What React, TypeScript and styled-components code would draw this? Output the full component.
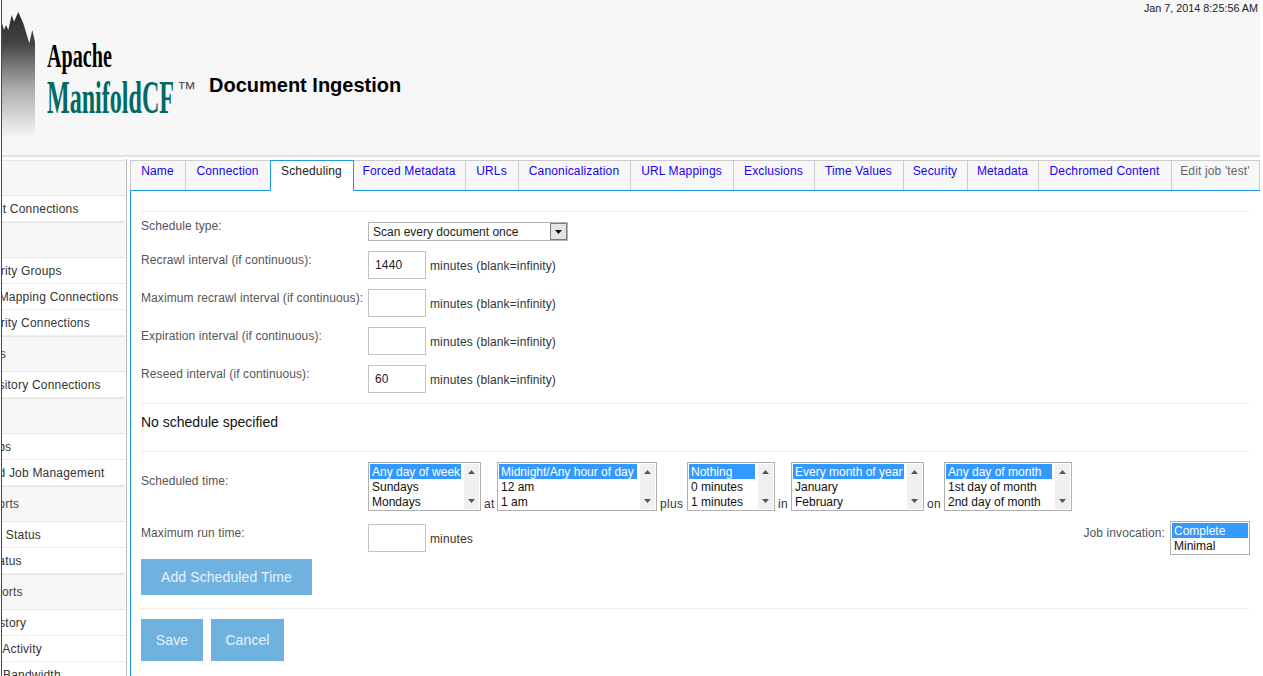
import React from "react";
import styled, { createGlobalStyle } from "styled-components";

const GlobalStyle = createGlobalStyle`
  html, body {
    margin: 0;
    height: 100%;
    overflow: hidden;
    background: #fff;
  }
  body {
    font-family: "Liberation Sans", Arial, sans-serif;
    font-size: 12px;
    color: #333;
  }
`;

const Page = styled.div`
  display: flex;
  height: 676px;
  overflow: hidden;
`;

const Edge = styled.div`
  width: 1px;
  margin-left: 1px;
  background: #3b4a63;
  flex: none;
`;

const Main = styled.div`
  width: 1258px;
  flex: none;
`;

const Header = styled.header`
  display: flex;
  height: 155px;
  background: #f7f7f7;
  border-bottom: 2px solid #e2e2e2;
`;

const LogoMark = styled.svg`
  width: 33px;
  height: 126px;
  margin-top: 12px;
  flex: none;
`;

const Brand = styled.div`
  width: 162px;
  margin-left: 12px;
  padding-top: 37px;
  flex: none;
`;

const BrandLine = styled.div<{ $size: number; $scale: number; $color: string; $height: number }>`
  font-family: "Liberation Serif", "Times New Roman", serif;
  font-weight: bold;
  font-size: ${(p) => p.$size}px;
  line-height: ${(p) => p.$height}px;
  color: ${(p) => p.$color};
  white-space: nowrap;
  transform: scaleX(${(p) => p.$scale});
  transform-origin: left center;
`;

const Trademark = styled.span`
  display: inline-block;
  margin-left: 5px;
  font-family: "Liberation Sans", Arial, sans-serif;
  font-weight: normal;
  font-size: 19px;
  line-height: 0;
  color: #555;
  vertical-align: 18px;
  transform: scaleX(1.95);
  transform-origin: left center;
`;

const Title = styled.h1`
  margin: 73px 0 0;
  font-size: 20px;
  line-height: 24px;
  font-weight: bold;
  color: #000;
`;

const DateStamp = styled.div`
  margin-left: auto;
  padding: 2px 2px 0 0;
  font-size: 10.8px;
  line-height: 13px;
  color: #222;
`;

const Body = styled.div`
  display: flex;
  padding-top: 2px;
`;

const Sidebar = styled.nav`
  width: 124px;
  height: 520px;
  border-right: 1px solid #bbb;
  overflow: hidden;
  flex: none;
`;

const SideList = styled.div`
  margin-left: -73px;
  margin-right: 1px;
  padding-top: 1px;
  letter-spacing: 0.2px;
`;

const SideSection = styled.div`
  height: 36px;
  box-sizing: border-box;
  display: flex;
  align-items: center;
  padding-left: 8px;
  background: #f7f7f7;
  border-top: 1px solid #e6e6e6;
  border-bottom: 1px solid #e6e6e6;
  color: #444;
  white-space: nowrap;
`;

const SideLink = styled.div`
  height: 26px;
  box-sizing: border-box;
  display: flex;
  align-items: center;
  padding-left: 17px;
  border-bottom: 1px dotted #ddd;
  color: #333;
  white-space: nowrap;
`;

const Content = styled.div`
  margin: 1px 0 0 3px;
  width: 1130px;
  flex: none;
`;

const Tabs = styled.div`
  display: flex;
  height: 30px;
`;

const Tab = styled.div<{ $active?: boolean; $plain?: boolean; $width: number }>`
  box-sizing: border-box;
  width: ${(p) => p.$width}px;
  padding: 3px 1px 0 0;
  line-height: 14px;
  letter-spacing: 0.15px;
  text-align: center;
  white-space: nowrap;
  background: ${(p) => (p.$active ? "#fff" : "#f7f7f7")};
  color: ${(p) => (p.$active ? "#222" : p.$plain ? "#666" : "#1a00ee")};
  border-top: 1px solid ${(p) => (p.$active ? "#1c9ae0" : "#ccc")};
  border-right: 1px solid ${(p) => (p.$active ? "#1c9ae0" : "#ccc")};
  border-left: ${(p) => (p.$active ? "1px solid #1c9ae0" : "none")};
  height: ${(p) => (p.$active ? "31px" : "30px")};
  margin-left: ${(p) => (p.$active ? "-1px" : "0")};
  position: relative;
  z-index: ${(p) => (p.$active ? 1 : 0)};

  &:first-child {
    border-left: 1px solid #ccc;
  }
`;

const Panel = styled.div`
  height: 486px;
  border-top: 1px solid #1c9ae0;
  border-left: 1px solid #1c9ae0;
  padding: 20px 10px 0;
  box-sizing: border-box;
`;

const Divider = styled.div<{ $before?: number; $after: number }>`
  border-top: 1px dotted #ddd;
  margin-top: ${(p) => p.$before ?? 0}px;
  margin-bottom: ${(p) => p.$after}px;
`;

const FormRow = styled.div<{ $gap?: number }>`
  display: flex;
  margin-bottom: ${(p) => p.$gap ?? 10}px;
`;

const Label = styled.div<{ $top: number }>`
  width: 227px;
  margin-top: ${(p) => p.$top}px;
  line-height: 14px;
  letter-spacing: 0.1px;
  color: #555;
  white-space: nowrap;
  flex: none;
`;

const Dropdown = styled.div`
  display: flex;
  align-items: center;
  justify-content: space-between;
  box-sizing: border-box;
  width: 200px;
  height: 19px;
  padding-left: 4px;
  border: 1px solid #b4b4b4;
  color: #222;
`;

const DropButton = styled.div`
  display: flex;
  align-items: center;
  justify-content: center;
  box-sizing: border-box;
  width: 17px;
  height: 17px;
  background: #e4e4e4;
  border: 1px solid #7c7c7c;
`;

const TextBox = styled.input<{ $mt?: number }>`
  box-sizing: border-box;
  width: 58px;
  height: 28px;
  margin: ${(p) => p.$mt ?? 0}px 0 0;
  padding: 0 6px;
  border: 1px solid #c4c4c4;
  font: 12px "Liberation Sans", Arial, sans-serif;
  letter-spacing: 0.2px;
  color: #222;
  background: #fff;
  outline: none;
`;

const Hint = styled.span`
  margin-left: 4px;
  align-self: center;
  padding-top: 2px;
  color: #333;
  line-height: 14px;
  letter-spacing: 0.12px;
`;

const Notice = styled.div`
  box-sizing: border-box;
  height: 47px;
  padding-bottom: 12px;
  display: flex;
  align-items: center;
  font-size: 14px;
  color: #111;
`;

const ListRow = styled.div`
  display: flex;
  align-items: flex-end;
  gap: 3px;
`;

const Joiner = styled.span<{ $width: number }>`
  width: ${(p) => p.$width}px;
  line-height: 14px;
  letter-spacing: 0.3px;
  color: #333;
  flex: none;
`;

const ListFrame = styled.div<{ $width: number }>`
  display: flex;
  box-sizing: border-box;
  width: ${(p) => p.$width}px;
  padding: 1px;
  border: 1px solid #b0b0b0;
  background: #fff;
  flex: none;
`;

const ListItems = styled.div`
  flex: 1;
  min-width: 0;
`;

const ListItem = styled.div<{ $selected?: boolean }>`
  height: 15px;
  line-height: 17px;
  padding-left: 2px;
  white-space: nowrap;
  overflow: hidden;
  color: ${(p) => (p.$selected ? "#fff" : "#111")};
  background: ${(p) => (p.$selected ? "#3399ff" : "transparent")};
`;

const ScrollTrack = styled.div`
  display: flex;
  flex-direction: column;
  align-items: center;
  justify-content: space-between;
  box-sizing: border-box;
  width: 15px;
  margin-left: 3px;
  padding: 6px 0;
  background: #f0f0f0;
  flex: none;
`;

const Invocation = styled.div`
  display: flex;
  margin-left: auto;
`;

const InvocationLabel = styled.div`
  margin: 5px 5px 0 0;
  line-height: 14px;
  letter-spacing: 0.1px;
  color: #555;
`;

const Actions = styled.div`
  display: flex;
  gap: 8px;
`;

const Button = styled.button<{ $height: number; $width: number }>`
  width: ${(p) => p.$width}px;
  height: ${(p) => p.$height}px;
  padding: 0;
  border: none;
  background: #6fb1df;
  color: #e8f2fa;
  font: 14px "Liberation Sans", Arial, sans-serif;
  letter-spacing: 0.1px;
`;

const sideGroups = [
  { title: "Outputs", links: ["List Output Connections"] },
  {
    title: "Authorities",
    links: ["List Authority Groups", "List User Mapping Connections", "List Authority Connections"],
  },
  { title: "Repositories", links: ["List Repository Connections"] },
  { title: "Jobs", links: ["List all Jobs", "Status and Job Management"] },
  { title: "Status Reports", links: ["Document Status", "Queue Status"] },
  { title: "History Reports", links: ["Simple History", "Maximum Activity", "Maximum Bandwidth"] },
];

const tabs = [
  { name: "Name", width: 56 },
  { name: "Connection", width: 85 },
  { name: "Scheduling", width: 84, active: true },
  { name: "Forced Metadata", width: 112 },
  { name: "URLs", width: 53 },
  { name: "Canonicalization", width: 112 },
  { name: "URL Mappings", width: 103 },
  { name: "Exclusions", width: 81 },
  { name: "Time Values", width: 89 },
  { name: "Security", width: 64 },
  { name: "Metadata", width: 71 },
  { name: "Dechromed Content", width: 133 },
  { name: "Edit job 'test'", width: 88, plain: true },
];

const intervals = [
  { label: "Recrawl interval (if continuous):", value: "1440" },
  { label: "Maximum recrawl interval (if continuous):", value: "" },
  { label: "Expiration interval (if continuous):", value: "" },
  { label: "Reseed interval (if continuous):", value: "60" },
];

const schedule = [
  { width: 113, items: ["Any day of week", "Sundays", "Mondays"] },
  { joiner: "at", joinerWidth: 10, width: 160, items: ["Midnight/Any hour of day", "12 am", "1 am"] },
  { joiner: "plus", joinerWidth: 24, width: 88, items: ["Nothing", "0 minutes", "1 minutes"] },
  { joiner: "in", joinerWidth: 10, width: 133, items: ["Every month of year", "January", "February"] },
  { joiner: "on", joinerWidth: 14, width: 128, items: ["Any day of month", "1st day of month", "2nd day of month"] },
];

function Arrow({ up, color = "#555" }: { up?: boolean; color?: string }) {
  return (
    <svg width={7} height={4} viewBox="0 0 7 4">
      <path d={up ? "M3.5 0 L7 4 L0 4 Z" : "M0 0 L7 0 L3.5 4 Z"} fill={color} />
    </svg>
  );
}

function ListBox({ width, items, scroll = true }: { width: number; items: string[]; scroll?: boolean }) {
  return (
    <ListFrame $width={width}>
      <ListItems>
        {items.map((item, i) => (
          <ListItem key={item} $selected={i === 0}>
            {item}
          </ListItem>
        ))}
      </ListItems>
      {scroll && (
        <ScrollTrack>
          <Arrow up />
          <Arrow />
        </ScrollTrack>
      )}
    </ListFrame>
  );
}

export default function App() {
  return (
    <Page>
      <GlobalStyle />
      <Edge />
      <Main>
        <Header>
          <LogoMark viewBox="0 0 33 126">
            <defs>
              <linearGradient id="feather" x1="0" y1="0" x2="0" y2="1">
                <stop offset="0" stopColor="#2a2a2a" />
                <stop offset="0.25" stopColor="#444" />
                <stop offset="0.6" stopColor="#aaa" />
                <stop offset="1" stopColor="#f7f7f7" />
              </linearGradient>
            </defs>
            <polygon
              points="0,11 2,18 4,13 6.3,18 9.7,3 12,9.7 16.3,0 21.3,11.3 27.3,31.3 30.3,18 33,29.7 33,126 0,126"
              fill="url(#feather)"
            />
          </LogoMark>
          <Brand>
            <BrandLine $size={33} $scale={0.61} $color="#000" $height={38}>
              Apache
            </BrandLine>
            <BrandLine $size={46} $scale={0.523} $color="#006b66" $height={46}>
              ManifoldCF
              <Trademark>™</Trademark>
            </BrandLine>
          </Brand>
          <Title>Document Ingestion</Title>
          <DateStamp>Jan 7, 2014 8:25:56 AM</DateStamp>
        </Header>
        <Body>
          <Sidebar>
            <SideList>
              {sideGroups.map((group) => (
                <React.Fragment key={group.title}>
                  <SideSection>{group.title}</SideSection>
                  {group.links.map((link) => (
                    <SideLink key={link}>{link}</SideLink>
                  ))}
                </React.Fragment>
              ))}
            </SideList>
          </Sidebar>
          <Content>
            <Tabs>
              {tabs.map((tab) => (
                <Tab key={tab.name} $width={tab.width} $active={tab.active} $plain={tab.plain}>
                  {tab.name}
                </Tab>
              ))}
            </Tabs>
            <Panel>
              <Divider $after={10} />
              <FormRow>
                <Label $top={-3}>Schedule type:</Label>
                <Dropdown>
                  Scan every document once
                  <DropButton>
                    <Arrow color="#111" />
                  </DropButton>
                </Dropdown>
              </FormRow>
              {intervals.map((row) => (
                <FormRow key={row.label}>
                  <Label $top={2}>{row.label}</Label>
                  <TextBox defaultValue={row.value} />
                  <Hint>minutes (blank=infinity)</Hint>
                </FormRow>
              ))}
              <Divider $after={0} />
              <Notice>No schedule specified</Notice>
              <Divider $after={10} />
              <FormRow>
                <Label $top={12}>Scheduled time:</Label>
                <ListRow>
                  {schedule.map((list) => (
                    <React.Fragment key={list.width}>
                      {list.joiner && <Joiner $width={list.joinerWidth ?? 0}>{list.joiner}</Joiner>}
                      <ListBox width={list.width} items={list.items} />
                    </React.Fragment>
                  ))}
                </ListRow>
              </FormRow>
              <FormRow $gap={4}>
                <Label $top={5}>Maximum run time:</Label>
                <TextBox $mt={3} />
                <Hint>minutes</Hint>
                <Invocation>
                  <InvocationLabel>Job invocation:</InvocationLabel>
                  <ListBox width={80} items={["Complete", "Minimal"]} scroll={false} />
                </Invocation>
              </FormRow>
              <Button $height={36} $width={171}>
                Add Scheduled Time
              </Button>
              <Divider $before={13} $after={10} />
              <Actions>
                <Button $height={42} $width={62}>
                  Save
                </Button>
                <Button $height={42} $width={73}>
                  Cancel
                </Button>
              </Actions>
            </Panel>
          </Content>
        </Body>
      </Main>
    </Page>
  );
}
